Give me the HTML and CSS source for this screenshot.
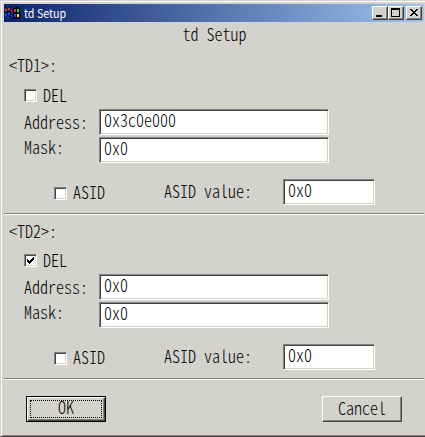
FILE: index.html
```html
<!DOCTYPE html>
<html lang="en">
<head>
<meta charset="utf-8">
<title>td Setup</title>
<link rel="stylesheet" href="styles.css">
</head>
<body>
<main class="window">
  <header class="titlebar">
    <svg class="logo" width="16" height="14" viewBox="0 0 16 14" shape-rendering="crispEdges">
      <path fill="#000" d="M8 2h2V1h4v1h1v11h-2v-1h-3v1H8z"/>
      <path fill="#f22" d="M9 3h2v3H9zM0 3h2v2H0zM3 2h2v2H3zM6 4h1v2H6z"/>
      <path fill="#2d3" d="M12 3h2v3h-2z"/>
      <path fill="#24f" d="M9 8h2v3H9zM0 8h2v2H0zM3 7h2v2H3zM6 9h1v2H6zM2 11h2v1H2z"/>
      <path fill="#fe2" d="M12 8h2v3h-2z"/>
      <path fill="#000" d="M0 1h1v1H0zM2 4h1v1H2zM5 3h1v1H5zM4 5h2v1H4zM1 6h2v1H1zM5 8h1v1H5zM2 9h1v1H2zM4 10h2v1H4zM6 12h1v1H6zM6 1h1v1H6z"/>
    </svg>
    <span class="caption">td Setup</span>
    <span class="control"><svg width="14" height="12" shape-rendering="crispEdges"><path d="M3 8h6v2H3z"/></svg></span>
    <span class="control"><svg width="14" height="12" shape-rendering="crispEdges"><path fill-rule="evenodd" d="M2 1h9v9H2zM3 3v6h7V3z"/></svg></span>
    <span class="control close"><svg width="14" height="12" shape-rendering="crispEdges"><path d="M3 2h2v1h1v1h2V3h1V2h2v1h-1v1H9v1H8v1h1v1h1v1h1v1H9V8H8V7H6v1H5v1H3V8h1V7h1V6h1V5H5V4H4V3H3z"/></svg></span>
  </header>
  <h1 class="heading"><span class="text">td Setup</span></h1>
  <section class="group">
    <h2 class="name"><span class="text">&lt;TD1&gt;:</span></h2>
    <label class="delete"><i class="box"></i><span class="text">DEL</span></label>
    <div class="field address"><span class="text">Address:</span><div class="input"><span class="text">0x3c0e000</span></div></div>
    <div class="field mask"><span class="text">Mask:</span><div class="input"><span class="text">0x0</span></div></div>
    <div class="asid"><i class="box"></i><span class="text asid-label">ASID</span><span class="text value-label">ASID value:</span><div class="input"><span class="text">0x0</span></div></div>
  </section>
  <section class="group">
    <h2 class="name"><span class="text">&lt;TD2&gt;:</span></h2>
    <label class="delete"><i class="box"><svg width="9" height="9" shape-rendering="crispEdges"><path d="M1 3h1v1h1v1h1V4h1V3h1V2h1V1h1v3H7v1H6v1H5v1H4v1H3V7H2V6H1z"/></svg></i><span class="text">DEL</span></label>
    <div class="field address"><span class="text">Address:</span><div class="input"><span class="text">0x0</span></div></div>
    <div class="field mask"><span class="text">Mask:</span><div class="input"><span class="text">0x0</span></div></div>
    <div class="asid"><i class="box"></i><span class="text asid-label">ASID</span><span class="text value-label">ASID value:</span><div class="input"><span class="text">0x0</span></div></div>
  </section>
  <footer class="actions">
    <button class="button default"><span class="focus"><span class="text">OK</span></span></button>
    <button class="button"><span class="text">Cancel</span></button>
  </footer>
</main>
</body>
</html>
```
FILE: styles.css
```css
* { box-sizing: border-box; }
body { margin: 0; background: #d4d2cc; color: #000; overflow: hidden; }
.window {
  width: 425px; height: 437px; padding: 2px 1px 0 3px;
  border: solid; border-width: 1px 0 1px 1px;
  border-color: #d4d2cc #d4d2cc #484448 #d4d2cc;
  box-shadow: inset 1px 1px #fff, inset 0 -1px #848284;
}
.titlebar {
  display: flex; align-items: center; height: 18px; margin-top: 1px; padding: 0 2px 0 1px;
  background: linear-gradient(90deg, #0a246a, #a0c4ee);
}
.logo { margin-top: -1px; }
.caption {
  flex: 1; margin-left: 3px; color: #fff;
  font: 12px/16px "Noto Sans CJK JP", "Liberation Sans", sans-serif;
  transform: scaleX(.89); transform-origin: left;
}
.control {
  width: 16px; height: 14px; background: #d4d2cc;
  border: 1px solid; border-color: #fff #404040 #404040 #fff;
  box-shadow: inset -1px -1px #848284;
}
.control svg { display: block; }
.close { margin-left: 2px; }
.text {
  display: block; height: 16px; white-space: pre;
  font: 300 16px/16px "Noto Sans CJK JP", "Liberation Mono", monospace;
  font-feature-settings: "hwid" 1;
  transform: scaleY(1.08);
}
.heading { display: flex; justify-content: center; margin: 3px 0 0; height: 16px; padding-left: 1px; }
.group { height: 165px; border-bottom: 1px solid #fff; box-shadow: inset 0 -1px #848284; }
.heading + .group { height: 174px; }
.name { height: 39px; margin: 0; padding: 7px 0 0 5px; }
.heading + .group .name { height: 48px; padding-top: 15px; }
.delete { display: flex; align-items: flex-start; gap: 6px; margin-left: 20px; height: 20px; }
.delete .text { margin-top: -3px; }
.box {
  display: block; width: 13px; height: 13px; background: #fff;
  border: 1px solid; border-color: #848284 #fff #fff #848284;
  box-shadow: inset 1px 1px #484448, inset -1px -1px #d4d2cc;
}
.box svg { display: block; margin: 1px; }
.field { display: flex; align-items: flex-start; height: 28px; margin-left: 20px; }
.field > .text { width: 75px; }
.address > .text { margin-top: 4px; }
.mask > .text { margin-top: 1px; }
.input {
  width: 230px; height: 26px; padding: 1px 0 0 4px; background: #fff;
  border: 1px solid; border-color: #848284 #fff #fff #848284;
  box-shadow: inset 1px 1px #484448, inset -1px -1px #d4d2cc;
}
.asid { display: flex; align-items: flex-start; margin: 14px 0 0 50px; }
.asid .box { margin-top: 8px; }
.asid-label { width: 91px; margin: 4px 0 0 6px; }
.value-label { width: 119px; margin-top: 3px; }
.asid .input { width: 92px; }
.actions { display: flex; justify-content: space-between; padding: 16px 22px 0; }
.button {
  display: flex; align-items: center; justify-content: center;
  width: 80px; height: 26px; padding: 0 0 4px; background: #d4d2cc; color: #000;
  border: 1px solid; border-color: #fff #484448 #484448 #fff;
  box-shadow: inset -1px -1px #848284;
}
.default { padding: 0; border-color: #000; box-shadow: inset 1px 1px #fff, inset -1px -1px #484448, inset -2px -2px #848284; }
.focus { display: block; width: 72px; height: 18px; border: 1px dotted #000; }
.focus .text { margin-top: -3px; }
```
